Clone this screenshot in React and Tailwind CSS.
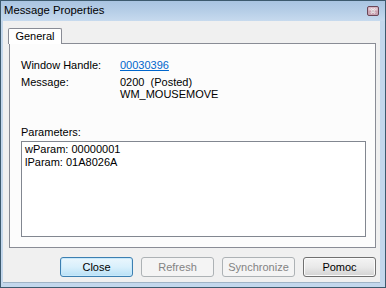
import React from 'react';

function CloseGlyph() {
  return (
    <svg width="12" height="10" viewBox="0 0 12 10">
      <rect x="0.5" y="0.5" width="11" height="9" rx="1.5" fill="#caa3b2" stroke="#6a4657" />
      <rect x="1.5" y="1.5" width="9" height="3" fill="#e3c8d2" />
      <path d="M4 2.8 L8 7.2 M8 2.8 L4 7.2" stroke="#ffffff" strokeWidth="1.6" />
      <path d="M4 2.8 L8 7.2 M8 2.8 L4 7.2" stroke="#4a2b3a" strokeWidth="0.5" opacity="0.5" />
    </svg>
  );
}

export default function App() {
  const buttons = [
    { label: 'Close', kind: 'default' },
    { label: 'Refresh', kind: 'disabled' },
    { label: 'Synchronize', kind: 'disabled' },
    { label: 'Pomoc', kind: 'normal' },
  ];

  const btnClass = {
    default: 'border-[#3c7fb1] bg-gradient-to-b from-[#eaf6fd] via-[#d9f0fc] to-[#b8e0f6] text-black shadow-[inset_0_0_0_1px_#c8e9fb]',
    disabled: 'border-[#adb2b5] bg-[#f4f4f4] text-[#838383]',
    normal: 'border-[#707070] bg-gradient-to-b from-[#f4f4f4] via-[#e9e9e9] to-[#d3d3d3] text-black shadow-[inset_0_0_0_1px_#fbfbfb]',
  };

  return (
    <div className="w-[386px] h-[288px] flex flex-col border border-[#3d5a6e] bg-[#c3d7ec] font-['Liberation_Sans',Arial,sans-serif] text-black">
      {/* title bar */}
      <div className="h-[20px] flex items-center justify-between pl-[3px] pr-[6px] bg-gradient-to-b from-[#a9c4e1] via-[#b6cee7] to-[#c7daee]">
        <span className="text-[11.3px] leading-none">Message Properties</span>
        <CloseGlyph />
      </div>

      {/* client area */}
      <div className="flex-1 ml-[2px] mr-[5px] mb-[4px] bg-[#f0f0f0] border-b border-[#9fb3c6] pl-[6px] pr-[4px] pt-[7px] flex flex-col text-[11px]">
        {/* tab strip */}
        <div className="flex">
          <div className="relative z-10 -ml-[1px] -mb-[1px] w-[54px] h-[16px] bg-white border border-b-0 border-[#898c95] rounded-t-[2px] flex items-center justify-center leading-none">
            General
          </div>
        </div>

        {/* tab page */}
        <div className="h-[205px] border border-[#898c95] bg-[#fcfcfc] pl-[11px] pr-[9px] pt-[15px] flex flex-col">
          <div className="flex leading-[13px]">
            <span className="w-[99px]">Window Handle:</span>
            <span className="text-[#0066cc] underline">00030396</span>
          </div>
          <div className="flex mt-[4px] leading-[13px]">
            <span className="w-[99px]">Message:</span>
            <div className="flex flex-col">
              <span>0200&nbsp;&nbsp;(Posted)</span>
              <span className="leading-[11px]">WM_MOUSEMOVE</span>
            </div>
          </div>

          <div className="mt-[26px] leading-[13px]">Parameters:</div>
          <div className="mt-[2px] h-[96px] border border-[#828790] bg-white pl-[3px] pt-[1px] leading-[13px]">
            <div>wParam: 00000001</div>
            <div>lParam: 01A8026A</div>
          </div>
        </div>

        {/* buttons */}
        <div className="mt-[9px] flex justify-end gap-[8px] pr-[0px]">
          {buttons.map(b => (
            <div
              key={b.label}
              className={`w-[73px] h-[20px] rounded-[3px] border flex items-center justify-center leading-none ${btnClass[b.kind]}`}
            >
              {b.label}
            </div>
          ))}
        </div>
      </div>
    </div>
  );
}
